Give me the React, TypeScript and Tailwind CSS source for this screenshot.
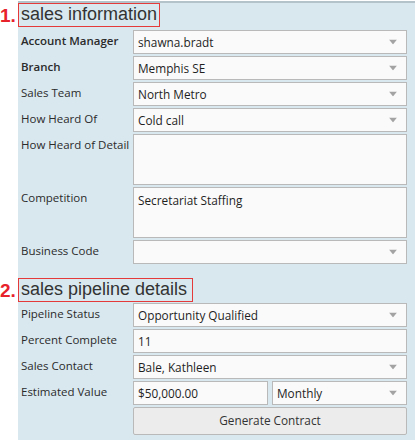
import React from 'react';

const Arrow = () => (
  <svg width="8" height="5" viewBox="0 0 8 5" className="absolute right-[9px] top-1/2 -translate-y-1/2">
    <path d="M0 0 H8 L4 5 Z" fill="#a3a3a3" />
  </svg>
);

const Label: React.FC<{ text: string; bold?: boolean }> = ({ text, bold }) => (
  <div className={`pl-[3px] pt-[3px] text-[11.5px] leading-[16px] text-[#2b2b2b] ${bold ? 'font-semibold' : ''}`}>{text}</div>
);

const Select: React.FC<{ value?: string; className?: string }> = ({ value, className }) => (
  <div className={`relative h-[24px] border border-[#b9b9b9] bg-[#fafafa] pl-[4px] text-[11.8px] leading-[22px] text-[#1f1f1f] ${className ?? ''}`}>
    {value}
    <Arrow />
  </div>
);

const Input: React.FC<{ value?: string; className?: string }> = ({ value, className }) => (
  <div className={`h-[24px] border border-[#b9b9b9] bg-[#fafafa] pl-[4px] text-[11.8px] leading-[22px] text-[#1f1f1f] ${className ?? ''}`}>
    {value}
  </div>
);

const Area: React.FC<{ value?: string }> = ({ value }) => (
  <div className="h-[51px] border border-[#b9b9b9] bg-[#fafafa] pl-[4px] pt-[4px] text-[11.8px] leading-[16px] text-[#1f1f1f]">{value}</div>
);

const Title: React.FC<{ n: string; text: string; w: string }> = ({ n, text, w }) => (
  <div className="flex items-end">
    <div className="w-[18px] text-[19px] font-bold leading-[22px] text-[#e8222b]" style={{ fontFamily: '"Liberation Sans", Arial, sans-serif' }}>
      {n}
    </div>
    <div
      className={`h-[24px] ${w} border border-[#e53a3a] pl-[2px] text-[18px] leading-[21px] text-[#333]`}
      style={{ fontFamily: '"Liberation Sans", Arial, sans-serif' }}
    >
      {text}
    </div>
  </div>
);

export default function App() {
  return (
    <div className="relative h-[440px] w-[415px] overflow-hidden bg-white" style={{ fontFamily: '"Open Sans", sans-serif' }}>
      <div className="absolute left-[18px] right-0 top-[1px] bottom-0 border-t-[2px] border-[#b4c2c9] bg-[#d9e8ef]" />
      <div className="relative">
        <div className="pt-[3px]">
          <Title n="1." text="sales information" w="w-[142px]" />
        </div>
        <div className="ml-[18px] mr-[8px] mt-[3px] grid grid-cols-[115px_1fr] gap-y-[2px]">
          <Label text="Account Manager" bold />
          <Select value="shawna.bradt" />
          <Label text="Branch" bold />
          <Select value="Memphis SE" />
          <Label text="Sales Team" />
          <Select value="North Metro" />
          <Label text="How Heard Of" />
          <Select value="Cold call" />
          <Label text="How Heard of Detail" />
          <Area />
          <Label text="Competition" />
          <Area value="Secretariat Staffing" />
          <Label text="Business Code" />
          <Select />
        </div>
        <div className="mt-[14px]">
          <Title n="2." text="sales pipeline details" w="w-[175px]" />
        </div>
        <div className="ml-[18px] mr-[8px] mt-[1px] grid grid-cols-[115px_1fr] gap-y-[2px]">
          <Label text="Pipeline Status" />
          <Select value="Opportunity Qualified" />
          <Label text="Percent Complete" />
          <Input value="11" />
          <Label text="Sales Contact" />
          <Select value="Bale, Kathleen" />
          <Label text="Estimated Value" />
          <div className="flex gap-[4px]">
            <Input value="$50,000.00" className="w-[135px]" />
            <Select value="Monthly" className="flex-1" />
          </div>
          <div />
          <button className="h-[28px] rounded-[2px] border border-[#b9b9b9] bg-[#ececec] text-[11.8px] text-[#333]">Generate Contract</button>
        </div>
      </div>
    </div>
  );
}
